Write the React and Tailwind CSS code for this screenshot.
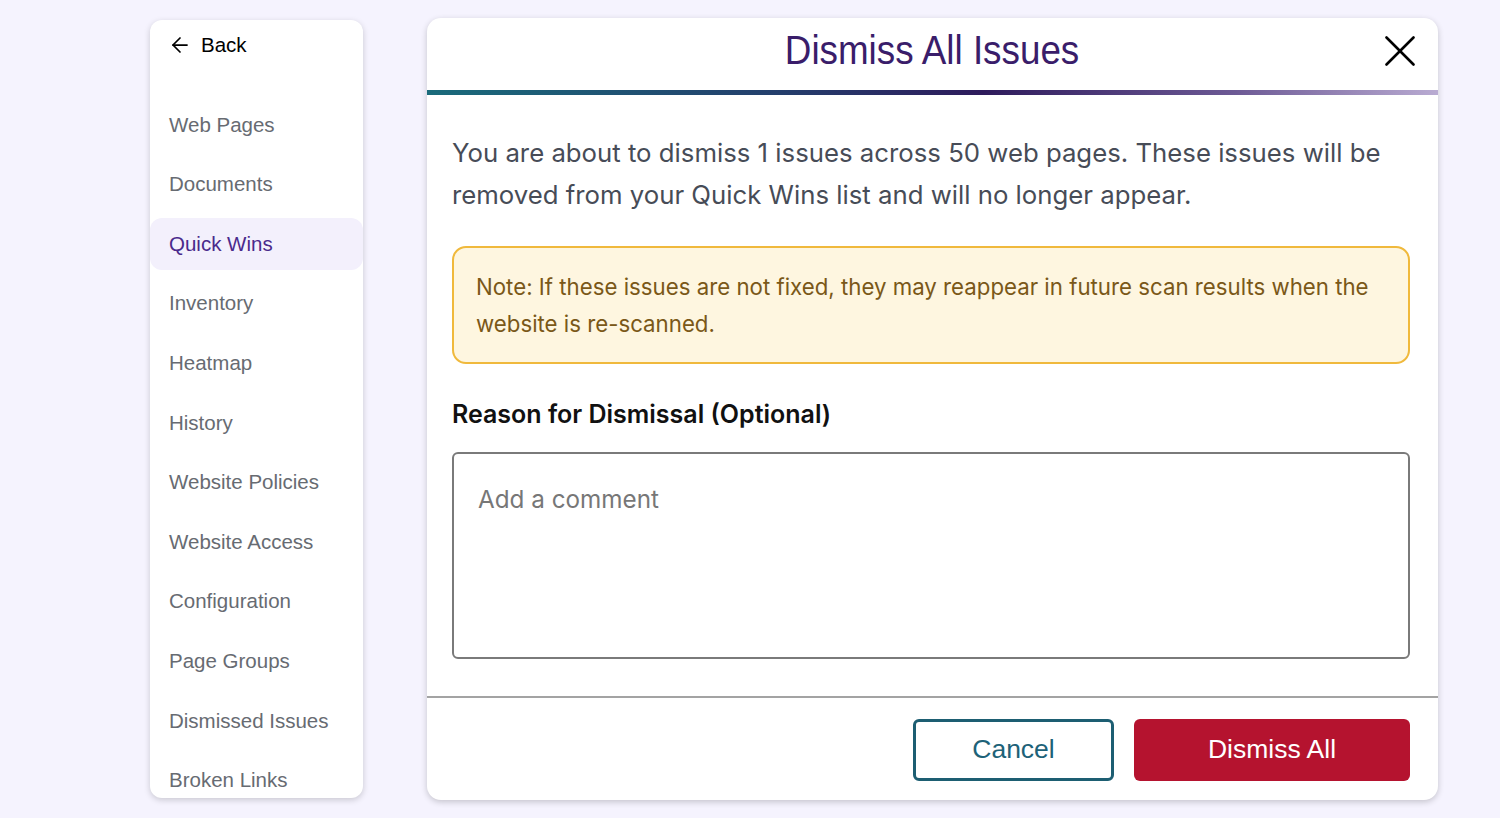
import { ArrowLeft } from 'lucide-react';

const navItems = [
  'Web Pages',
  'Documents',
  'Quick Wins',
  'Inventory',
  'Heatmap',
  'History',
  'Website Policies',
  'Website Access',
  'Configuration',
  'Page Groups',
  'Dismissed Issues',
  'Broken Links',
];

function Sidebar() {
  return (
    <div className="w-[213px] h-[778px] mt-[2px] shrink-0 bg-white rounded-xl shadow-[0_2px_6px_rgba(0,0,0,0.18)] overflow-hidden font-['Liberation_Sans',Arial,sans-serif]">
      <div className="flex items-center gap-[9px] pl-[18px] h-[50px] text-[20.5px] text-black">
        <ArrowLeft size={24} strokeWidth={1.75} />
        <span>Back</span>
      </div>
      <div className="flex flex-col gap-[7.6px] mt-[29px]">
        {navItems.map(item => (
          <div
            key={item}
            className={
              item === 'Quick Wins'
                ? 'h-[52px] flex items-center pl-[19px] rounded-xl bg-[#f3f0fc] text-[20.5px] text-[#4a2a8c]'
                : 'h-[52px] flex items-center pl-[19px] text-[20.5px] text-[#676b72]'
            }
          >
            {item}
          </div>
        ))}
      </div>
    </div>
  );
}

function DismissModal() {
  return (
    <div className="w-[1011px] h-[782px] bg-white rounded-[14px] shadow-[0_2px_6px_rgba(0,0,0,0.2)] overflow-hidden flex flex-col">
      {/* header */}
      <div className="relative h-[72px] flex items-center justify-center shrink-0">
        <h2 className="text-[40px] text-[#3a1d6a] scale-x-[0.92] font-['Liberation_Sans',Arial,sans-serif] -mt-[8px]">
          Dismiss All Issues
        </h2>
        <button className="absolute right-[23px] top-[18px] text-black">
          <svg width="30" height="30" viewBox="0 0 30 30" fill="none" stroke="currentColor" strokeWidth="2.6" strokeLinecap="round">
            <path d="M1.5 1.5L28.5 28.5" />
            <path d="M28.5 1.5L1.5 28.5" />
          </svg>
        </button>
      </div>
      <div className="h-[5px] shrink-0 bg-[linear-gradient(90deg,#1a6b7b_0%,#243e6c_35%,#2e1b5c_55%,#6d5a95_80%,#b9abd2_100%)]" />

      {/* body */}
      <div className="flex-1 pl-[25px] pr-[28px] pt-[37px] font-['Inter','Noto_Sans',sans-serif]">
        <p className="text-[25.75px] leading-[42px] text-[#474c57]">
          You are about to dismiss 1 issues across 50 web pages. These issues will be removed from your Quick Wins list and will no longer appear.
        </p>

        <div className="mt-[30px] border-2 border-[#f0b93c] bg-[#fef6e0] rounded-[14px] px-[22px] py-[20px]">
          <p className="text-[22.25px] leading-[37px] text-[#7a5818]">
            Note: If these issues are not fixed, they may reappear in future scan results when the website is re-scanned.
          </p>
        </div>

        <h3 className="mt-[34px] text-[25px] leading-[32px] font-semibold text-[#111]">
          Reason for Dismissal (Optional)
        </h3>

        <textarea
          placeholder="Add a comment"
          className="mt-[22px] block w-full h-[207px] border-2 border-[#7a7a7a] rounded-[6px] px-[24px] pt-[30px] text-[24.25px] leading-[32px] text-[#333] placeholder:text-[#777] resize-none outline-none"
        />
      </div>

      {/* footer */}
      <div className="border-t-2 border-[#a3a3a3] h-[104px] shrink-0 flex items-start justify-end gap-[20px] pt-[21px] pr-[28px] font-['Liberation_Sans',Arial,sans-serif]">
        <button className="w-[201px] h-[62px] border-[3px] border-[#1d5e72] rounded-[6px] text-[26.5px] text-[#1d6278] bg-white">
          Cancel
        </button>
        <button className="w-[276px] h-[62px] rounded-[6px] bg-[#b5132f] text-[26.5px] text-white">
          Dismiss All
        </button>
      </div>
    </div>
  );
}

export default function App() {
  return (
    <div className="min-h-[818px] w-full bg-[#f5f3fe] flex items-start gap-[64px] pl-[150px] pt-[18px]">
      <Sidebar />
      <DismissModal />
    </div>
  );
}
